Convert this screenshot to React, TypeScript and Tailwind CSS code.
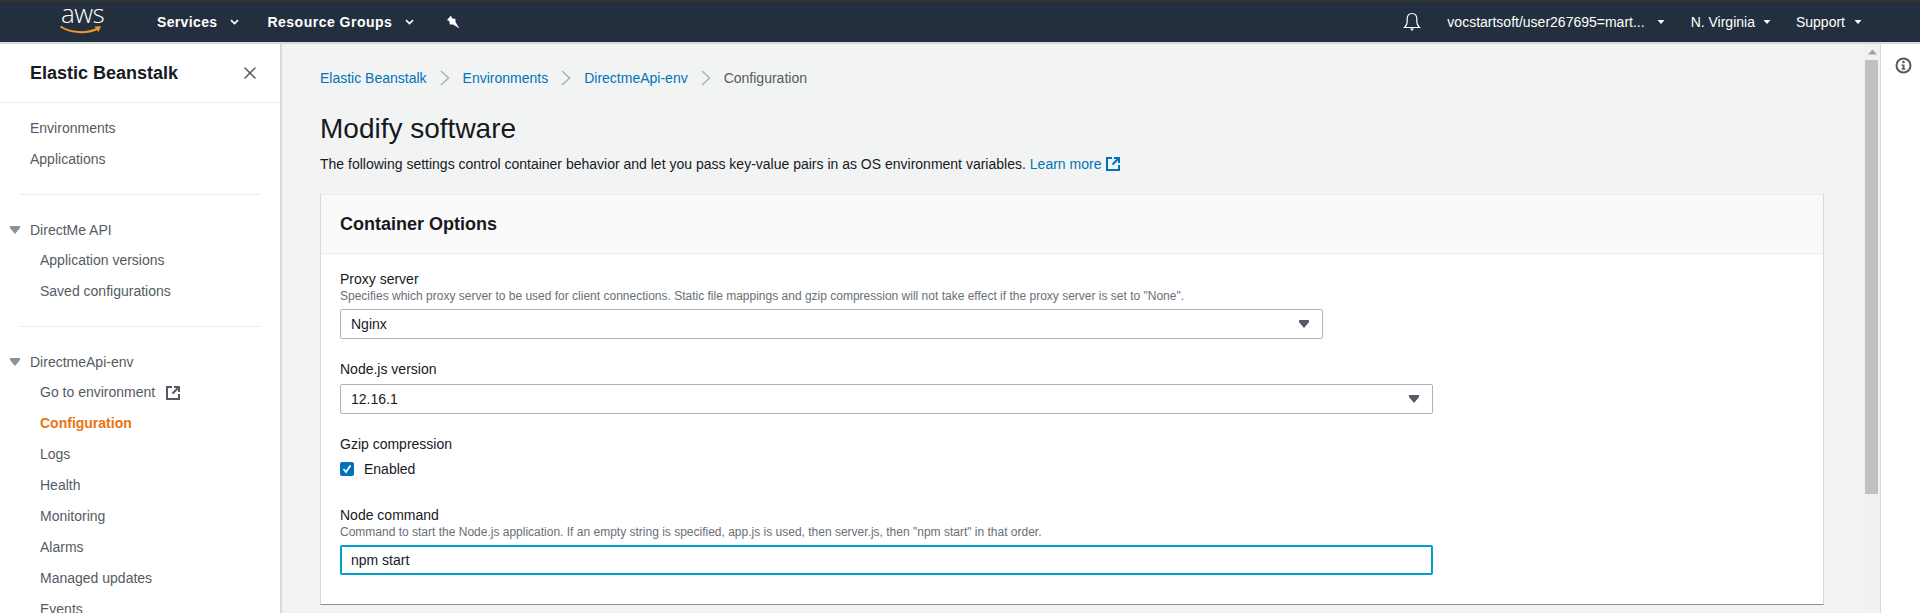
import React from "react"
import { X } from "lucide-react"

const FONT = "font-['Liberation_Sans',Arial,sans-serif]"

function Caret({ small }: { small?: boolean }) {
  if (small) {
    return (
      <svg width="8" height="6" viewBox="0 0 8 6" className="shrink-0">
        <path d="M0.5 1 H7.5 L4 5 Z" fill="#ffffff" />
      </svg>
    )
  }
  return (
    <svg width="9" height="6" viewBox="0 0 9 6" className="shrink-0">
      <path d="M1 1.2 L4.5 4.6 L8 1.2" fill="none" stroke="#ffffff" strokeWidth="1.7" />
    </svg>
  )
}

function ExternalIcon({ color, size }: { color: string; size: number }) {
  return (
    <svg width={size} height={size} viewBox="0 0 14 14" className="shrink-0">
      <path d="M6 1 H1 V13 H13 V8" fill="none" stroke={color} strokeWidth="2" />
      <path d="M8 1 H13 V6 M13 1 L6.5 7.5" fill="none" stroke={color} strokeWidth="2" />
    </svg>
  )
}

function Triangle({ color }: { color: string }) {
  return (
    <svg width="10" height="8" viewBox="0 0 10 8" className="shrink-0">
      <path d="M0 0 H10 V2 L5 8 L0 2 Z" fill={color} />
    </svg>
  )
}

function Chevron() {
  return (
    <svg width="10" height="16" viewBox="0 0 10 16" className="mx-[13px] shrink-0">
      <path d="M1 1 L8.5 8 L1 15" fill="none" stroke="#aab7b8" strokeWidth="1.6" />
    </svg>
  )
}

function TopBar() {
  return (
    <header className="flex h-[44px] shrink-0 items-center border-t-2 border-b-2 border-t-[#333333] border-b-[#d5dbdb] bg-[#232f3e] text-white">
      <div className="relative ml-[60px] h-[40px] w-[42px]">
        <span className="absolute top-[1px] left-[1px] font-['Open_Sans',sans-serif] text-[26px] leading-[20px] font-light tracking-[-0.5px]">
          aws
        </span>
        <svg width="42" height="11" viewBox="0 0 42 11" className="absolute top-[23px] left-0">
          <path d="M0.5 1.5 C10 8 26 9 37 4" fill="none" stroke="#f7981d" strokeWidth="2" />
          <path d="M34.5 1.5 L41 1.2 L38.5 7 Z" fill="#f7981d" />
        </svg>
      </div>
      <span className="ml-[55px] text-[14px] font-bold tracking-[0.35px]">Services</span>
      <span className="ml-[13px]"><Caret /></span>
      <span className="ml-[28px] text-[14px] font-bold tracking-[0.5px]">Resource Groups</span>
      <span className="ml-[13px]"><Caret /></span>
      <svg width="14" height="14" viewBox="0 0 14 14" className="ml-[32px]">
        <path d="M5 0.5 L1 5 L3.2 6 L3.8 9.5 L7 9.5 L13.5 13.5 L9.5 7 L9.5 4 L6 3.2 Z" fill="#ffffff" />
      </svg>
      <div className="flex-1" />
      <svg width="18" height="20" viewBox="0 0 18 20" className="mr-[26px]">
        <path d="M9 1.5 C5.5 1.5 4.2 4 4.2 7 V10 C4.2 12.5 2.8 14 1.5 15.5 H16.5 C15.2 14 13.8 12.5 13.8 10 V7 C13.8 4 12.5 1.5 9 1.5 Z" fill="none" stroke="#ffffff" strokeWidth="1.2" />
        <path d="M7 16.5 H11 L9 19 Z" fill="#ffffff" />
      </svg>
      <span className="text-[14px]">vocstartsoft/user267695=mart...</span>
      <span className="ml-[12px]"><Caret small /></span>
      <span className="ml-[26px] text-[14px]">N. Virginia</span>
      <span className="ml-[8px]"><Caret small /></span>
      <span className="ml-[25px] text-[14px]">Support</span>
      <span className="mr-[58px] ml-[9px]"><Caret small /></span>
    </header>
  )
}

const ENV_LINKS = ["Logs", "Health", "Monitoring", "Alarms", "Managed updates", "Events"]

function SideRow({ label, active }: { label: string; active?: boolean }) {
  return (
    <div className={`flex h-[31px] items-center pl-[40px] text-[14px] ${active ? "font-bold text-[#ec7211]" : "text-[#545b64]"}`}>
      {label}
    </div>
  )
}

function SideGroup({ label }: { label: string }) {
  return (
    <div className="flex h-[30px] items-center text-[14px] text-[#545b64]">
      <span className="ml-[10px] w-[20px]"><Triangle color="#879596" /></span>
      {label}
    </div>
  )
}

function Sidebar() {
  return (
    <aside className="h-full w-[282px] shrink-0 overflow-hidden border-r-2 border-[#d5dbdb] bg-white">
      <div className="flex h-[59px] items-center justify-between border-b border-[#eaeded] pr-[20px] pl-[30px]">
        <span className="text-[18px] font-bold text-[#16191f]">Elastic Beanstalk</span>
        <X size={20} strokeWidth={1.8} color="#545b64" />
      </div>
      <div className="pt-[10px]">
        <div className="flex h-[31px] items-center pl-[30px] text-[14px] text-[#545b64]">Environments</div>
        <div className="flex h-[31px] items-center pl-[30px] text-[14px] text-[#545b64]">Applications</div>
      </div>
      <div className="mx-[20px] mt-[19px] mb-[20px] h-px bg-[#eaeded]" />
      <SideGroup label="DirectMe API" />
      <SideRow label="Application versions" />
      <SideRow label="Saved configurations" />
      <div className="mx-[20px] mt-[19px] mb-[20px] h-px bg-[#eaeded]" />
      <SideGroup label="DirectmeApi-env" />
      <div className="flex h-[31px] items-center gap-[11px] pl-[40px] text-[14px] text-[#545b64]">
        Go to environment
        <ExternalIcon color="#545b64" size={14} />
      </div>
      <SideRow label="Configuration" active />
      {ENV_LINKS.map((label) => (
        <SideRow key={label} label={label} />
      ))}
    </aside>
  )
}

function Label({ children }: { children: React.ReactNode }) {
  return <div className="h-[20px] text-[14px] leading-[20px] text-[#16191f]">{children}</div>
}

function Hint({ children }: { children: React.ReactNode }) {
  return <div className="h-[14px] text-[12px] leading-[14px] text-[#687078]">{children}</div>
}

function SelectBox({ value, width, className }: { value: string; width: string; className: string }) {
  return (
    <div className={`flex h-[30px] items-center justify-between rounded-[2px] border border-[#aab7b8] bg-white pr-[13px] pl-[10px] text-[14px] text-[#16191f] ${width} ${className}`}>
      {value}
      <Triangle color="#545b64" />
    </div>
  )
}

function ContainerOptions() {
  return (
    <section className="mt-[20px] border border-t-[#eaeded] border-r-[#d5dbdb] border-b-[#879596] border-l-[#d5dbdb] bg-white">
      <div className="flex h-[59px] items-center border-b border-[#eaeded] bg-[#fafafa] pl-[19px] text-[18px] leading-[22px] font-bold text-[#16191f]">
        Container Options
      </div>
      <div className="px-[19px] pt-[15px] pb-[29px]">
        <Label>Proxy server</Label>
        <Hint>Specifies which proxy server to be used for client connections. Static file mappings and gzip compression will not take effect if the proxy server is set to "None".</Hint>
        <SelectBox value="Nginx" width="w-[983px]" className="mt-[6px]" />
        <div className="mt-[20px]"><Label>Node.js version</Label></div>
        <SelectBox value="12.16.1" width="w-[1093px]" className="mt-[5px]" />
        <div className="mt-[20px]"><Label>Gzip compression</Label></div>
        <div className="mt-[5px] flex h-[20px] items-center gap-[10px] text-[14px] text-[#16191f]">
          <span className="flex h-[14px] w-[14px] items-center justify-center rounded-[2px] bg-[#0073bb]">
            <svg width="10" height="10" viewBox="0 0 10 10">
              <path d="M1.5 5 L4 8 L8.5 1.5" fill="none" stroke="#ffffff" strokeWidth="1.8" />
            </svg>
          </span>
          Enabled
        </div>
        <div className="mt-[26px]"><Label>Node command</Label></div>
        <Hint>Command to start the Node.js application. If an empty string is specified, app.js is used, then server.js, then "npm start" in that order.</Hint>
        <input
          readOnly
          value="npm start"
          className="mt-[6px] block h-[30px] w-[1093px] rounded-[2px] border-2 border-[#00a1c9] bg-white pl-[9px] text-[14px] text-[#16191f] outline-none"
        />
      </div>
    </section>
  )
}

function Scrollbar() {
  return (
    <div className="flex h-full w-[17px] shrink-0 flex-col border-r border-[#d5dbdb] bg-[#f1f1f1]">
      <div className="flex h-[16px] items-center justify-center">
        <svg width="9" height="6" viewBox="0 0 9 6">
          <path d="M0 5.5 L4.5 0.5 L9 5.5 Z" fill="#a3a3a3" />
        </svg>
      </div>
      <div className="ml-px h-[434px] w-[13px] bg-[#c1c1c1]" />
    </div>
  )
}

export default function App() {
  return (
    <div className={`flex h-[613px] w-[1920px] flex-col overflow-hidden bg-white ${FONT}`}>
      <TopBar />
      <div className="flex min-h-0 flex-1">
        <Sidebar />
        <main className="h-full w-[1582px] shrink-0 overflow-hidden bg-[#f2f3f3] pt-[24px] pr-[40px] pl-[38px]">
          <nav className="flex h-[20px] items-center text-[14px]">
            <span className="text-[#0073bb]">Elastic Beanstalk</span>
            <Chevron />
            <span className="text-[#0073bb]">Environments</span>
            <Chevron />
            <span className="text-[#0073bb]">DirectmeApi-env</span>
            <Chevron />
            <span className="text-[#545b64]">Configuration</span>
          </nav>
          <h1 className="mt-[23px] h-[36px] text-[28px] leading-[36px] font-normal text-[#16191f]">Modify software</h1>
          <p className="mt-[7px] flex h-[20px] items-center text-[14px] text-[#16191f]">
            The following settings control container behavior and let you pass key-value pairs in as OS environment variables.
            <span className="ml-[4px] text-[#0073bb]">Learn more</span>
            <span className="ml-[5px]"><ExternalIcon color="#0073bb" size={14} /></span>
          </p>
          <ContainerOptions />
        </main>
        <Scrollbar />
        <div className="flex-1 bg-white pt-[13px] pl-[14px]">
          <svg width="17" height="17" viewBox="0 0 17 17">
            <circle cx="8.5" cy="8.5" r="7" fill="none" stroke="#545b64" strokeWidth="2" />
            <circle cx="8.5" cy="5" r="1.3" fill="#545b64" />
            <path d="M6.5 7.5 H9.5 V11.5 H10.5 V12.8 H6.5 V11.5 H7.5 V8.8 H6.5 Z" fill="#545b64" />
          </svg>
        </div>
      </div>
    </div>
  )
}
